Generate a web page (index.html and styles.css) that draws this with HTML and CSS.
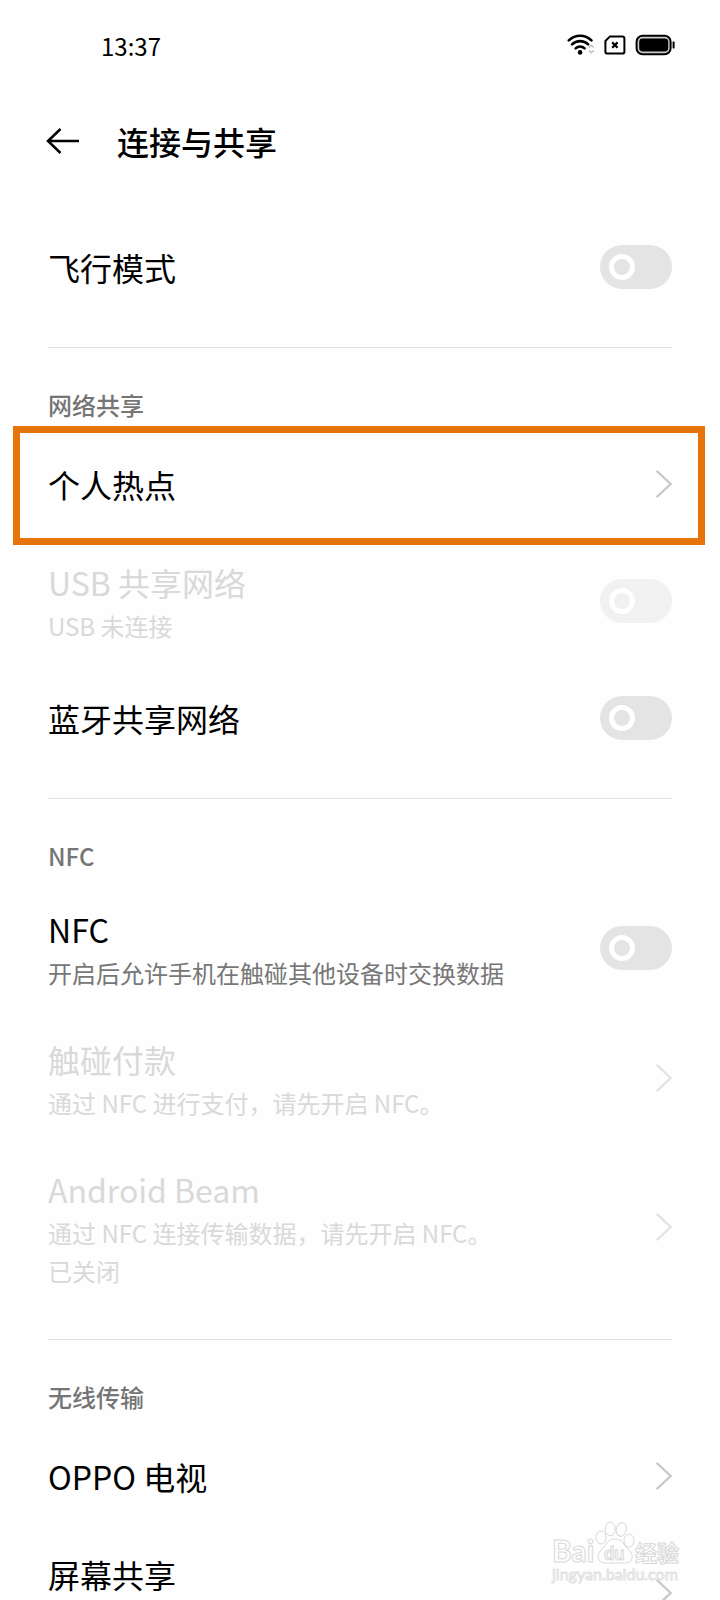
FILE: index.html
```html
<!DOCTYPE html>
<html lang="zh-CN">
<head>
<meta charset="utf-8">
<meta name="viewport" content="width=device-width, initial-scale=1">
<title>连接与共享</title>
<link rel="stylesheet" href="styles.css">
</head>
<body>
<svg class="defs" aria-hidden="true">
  <symbol id="chevron" viewBox="0 0 18 30"><path d="M3.400 2.500 16.700 15 3.400 27.500" fill="none" stroke="currentColor" stroke-width="2.400" stroke-linecap="round" stroke-linejoin="round"/></symbol>
</svg>
<div class="screen">
  <div class="status">
    <time>13:37</time>
    <div class="status-icons">
      <svg width="28" height="22" viewBox="0 0 28 22" aria-hidden="true">
        <g fill="none" stroke="#000" stroke-width="2.600" stroke-linecap="round">
          <path d="M1.800 6.400C8.400 .1 18 .1 24.400 6.400"/>
          <path d="M5 10.400C9.600 6 16.600 6 21.200 10.400"/>
          <path d="M8.600 14.400C11.200 12 15 12 17.600 14.400"/>
        </g>
        <circle cx="13.100" cy="18.400" r="2.300"/>
        <path d="M22 13.500 24.300 11.200 26.600 13.500M22 16.500 24.300 18.800 26.600 16.500" fill="none" stroke="#bbb" stroke-width="1.400"/>
      </svg>
      <svg width="22" height="20" viewBox="0 0 22 20" aria-hidden="true">
        <path d="M6 1.400H18.200Q20.400 1.400 20.400 3.600V16.400Q20.400 18.600 18.200 18.600H3.600Q1.400 18.600 1.400 16.400V6Z" fill="none" stroke="#000" stroke-width="2" stroke-linejoin="round"/>
        <path d="M8.200 7.400 13.600 12.800M13.600 7.400 8.200 12.800" stroke="#000" stroke-width="2.200"/>
      </svg>
      <svg width="40" height="22" viewBox="0 0 40 22" aria-hidden="true">
        <rect x="1.600" y="1.800" width="34" height="18.400" rx="6" fill="#ccc" stroke="#000" stroke-width="2"/>
        <rect x="4.200" y="4.500" width="29" height="13" rx="3.400"/>
        <rect x="37.600" y="7.600" width="2" height="6.800" rx=".6"/>
      </svg>
    </div>
  </div>
  <header class="topbar">
    <button class="back" type="button" aria-label="返回">
      <svg width="34" height="28" viewBox="0 0 34 28" aria-hidden="true"><path d="M14.500 2 2 14 14.500 26M2 14H33" fill="none" stroke="#000" stroke-width="2.500"/></svg>
    </button>
    <h1>连接与共享</h1>
  </header>
  <main class="list">
    <section>
      <label class="row"><span class="text"><span class="name">飞行模式</span></span><input class="switch" type="checkbox" role="switch"></label>
    </section>
    <section>
      <h2>网络共享</h2>
      <a class="row highlighted" href="#hotspot"><span class="text"><span class="name">个人热点</span></span><svg class="chevron" aria-hidden="true"><use href="#chevron"/></svg></a>
      <label class="row disabled"><span class="text"><span class="name">USB 共享网络</span><span class="note">USB 未连接</span></span><input class="switch" type="checkbox" role="switch" disabled></label>
      <label class="row"><span class="text"><span class="name">蓝牙共享网络</span></span><input class="switch" type="checkbox" role="switch"></label>
    </section>
    <section>
      <h2>NFC</h2>
      <label class="row"><span class="text"><span class="name">NFC</span><span class="note">开启后允许手机在触碰其他设备时交换数据</span></span><input class="switch" type="checkbox" role="switch"></label>
      <a class="row disabled" href="#pay" aria-disabled="true"><span class="text"><span class="name">触碰付款</span><span class="note">通过 NFC 进行支付，请先开启 NFC。</span></span><svg class="chevron" aria-hidden="true"><use href="#chevron"/></svg></a>
      <a class="row disabled" href="#beam" aria-disabled="true"><span class="text"><span class="name">Android Beam</span><span class="note">通过 NFC 连接传输数据，请先开启 NFC。</span><span class="note">已关闭</span></span><svg class="chevron" aria-hidden="true"><use href="#chevron"/></svg></a>
    </section>
    <section>
      <h2>无线传输</h2>
      <a class="row" href="#tv"><span class="text"><span class="name">OPPO 电视</span></span><svg class="chevron" aria-hidden="true"><use href="#chevron"/></svg></a>
      <a class="row" href="#cast"><span class="text two-line"><span class="name">屏幕共享</span></span><svg class="chevron" aria-hidden="true"><use href="#chevron"/></svg></a>
    </section>
  </main>
  <svg class="watermark" width="132" height="68" viewBox="0 0 132 68">
    <g class="outline">
      <text class="brand" x="2" y="42">Bai</text>
      <ellipse cx="51" cy="17.500" rx="5" ry="6.500"/>
      <ellipse cx="60.300" cy="9" rx="5" ry="6.800"/>
      <ellipse cx="71.300" cy="9.500" rx="5" ry="6.800" transform="rotate(12 71.300 9.500)"/>
      <ellipse cx="79" cy="20.700" rx="5" ry="6.500"/>
      <path d="M65 19C57 19 57 25 52 29C46 34 47 43 55 43H75C84 43 84 34 78 29C73 25 73 19 65 19Z"/>
      <text class="du" x="54" y="40">du</text>
      <text class="cjk" x="85" y="41">经验</text>
    </g>
    <text class="site" x="2" y="60">jingyan.baidu.com</text>
  </svg>
</div>
</body>
</html>
```
FILE: styles.css
```css
* {
  box-sizing: border-box;
}

body {
  margin: 0;
  background: #fefefe;
  color: #000;
  font-family: "Noto Sans CJK SC", sans-serif;
}

.defs {
  display: none;
}

.screen {
  position: relative;
  display: flex;
  flex-direction: column;
  height: 100vh;
}

.status {
  flex: none;
  display: flex;
  align-items: center;
  justify-content: space-between;
  height: 90px;
  padding: 0 45px 0 101px;
  font-size: 24px;
}

.status-icons {
  display: flex;
  align-items: center;
  gap: 9px;
}

.topbar {
  flex: none;
  display: flex;
  align-items: center;
  gap: 37px;
  height: 102px;
  padding: 0 46px;
}

.back {
  display: flex;
  padding: 0;
  border: 0;
  background: none;
}

h1 {
  margin: 0;
  font-size: 32px;
  font-weight: 500;
  line-height: 50px;
}

.list {
  flex: 1;
  min-height: 0;
  padding-top: 23px;
  overflow-y: auto;
  scrollbar-width: none;
}

section + section::before {
  content: "";
  display: block;
  height: 1px;
  margin: 28px 48px 0;
  background: #e2e2e2;
}

h2 {
  margin: 0;
  padding: 40px 48px 10px;
  color: #757575;
  font-size: 24px;
  font-weight: 500;
  line-height: 34px;
}

.row {
  position: relative;
  display: flex;
  align-items: center;
  justify-content: space-between;
  gap: 24px;
  min-height: 104px;
  padding: 21px 48px;
  color: #000;
  text-decoration: none;
}

.text {
  display: flex;
  flex-direction: column;
}

.two-line {
  min-height: 88px;
}

.name {
  font-size: 32px;
  line-height: 50px;
}

.note {
  color: #777;
  font-size: 24px;
  line-height: 38px;
}

.disabled,
.disabled .note {
  color: #d9d9d9;
}

.highlighted::after {
  content: "";
  position: absolute;
  inset: -6px 15px -9px 13px;
  border: 7px solid #e67408;
}

.switch {
  flex: none;
  appearance: none;
  width: 72px;
  height: 44px;
  margin: 0;
  padding: 9px;
  border-radius: 22px;
  background: #e4e4e4;
}

.switch::before {
  content: "";
  display: block;
  width: 16px;
  height: 16px;
  border: 5px solid #fff;
  border-radius: 50%;
}

.switch:checked::before {
  margin-left: auto;
}

.switch:disabled {
  background: #f1f1f1;
}

.chevron {
  flex: none;
  width: 18px;
  height: 30px;
  color: #c8c8c8;
}

.disabled .chevron {
  color: #e2e2e2;
}

.watermark {
  position: absolute;
  right: 38px;
  bottom: 12px;
  font-family: Lato, "Noto Sans CJK SC", sans-serif;
  pointer-events: none;
}

.outline {
  fill: #fefefe;
  stroke: #d8d8d8;
  stroke-width: 1;
}

.brand {
  font-size: 30px;
  font-weight: 700;
}

.du {
  font-size: 18px;
  font-weight: 700;
}

.cjk {
  font-size: 22px;
  font-weight: 700;
}

.site {
  fill: #fefefe;
  stroke: #e2e2e2;
  stroke-width: 1;
  font-size: 16px;
}
```
